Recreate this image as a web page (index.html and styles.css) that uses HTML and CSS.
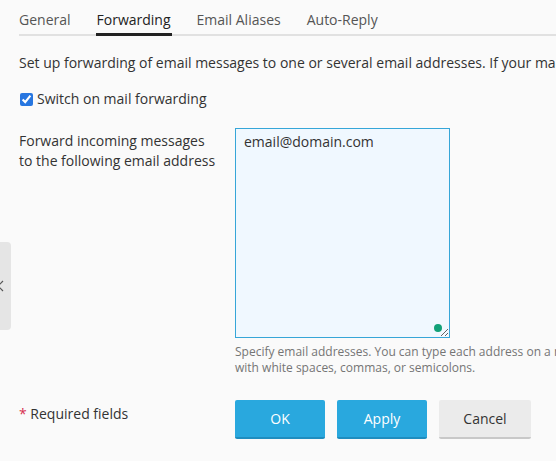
FILE: index.html
```html
<!DOCTYPE html>
<html lang="en">
<head>
    <meta charset="UTF-8">
    <meta name="viewport" content="width=device-width, initial-scale=1.0">
    <title>Mail Settings</title>
    <link rel="stylesheet" href="styles.css">
</head>
<body>
    <div class="side-toggle">
        <svg width="8" height="12" viewBox="0 0 8 12"><path d="M5 1 L0 6 L5 11" fill="none" stroke="#555" stroke-width="1.2"/></svg>
    </div>

    <div class="page">
        <div class="tabs">
            <div class="tab">General</div>
            <div class="tab active">Forwarding</div>
            <div class="tab">Email Aliases</div>
            <div class="tab">Auto-Reply</div>
        </div>

        <p class="intro">Set up forwarding of email messages to one or several email addresses. If your mailbox is full, messages will not be forwarded.</p>

        <label class="check-row">
            <input type="checkbox" checked>
            <span>Switch on mail forwarding</span>
        </label>

        <div class="form-row">
            <div class="field-label">Forward incoming messages<br>to the following email address</div>
            <div class="field">
                <div class="textarea-wrap">
                    <textarea class="addresses">email@domain.com</textarea>
                    <span class="status-dot"></span>
                </div>
                <div class="hint">Specify email addresses. You can type each address on a new line or separate them<br>with white spaces, commas, or semicolons.</div>
            </div>
        </div>

        <div class="form-row actions">
            <div class="required"><span class="star">*</span> Required fields</div>
            <div class="buttons">
                <button class="btn primary">OK</button>
                <button class="btn primary">Apply</button>
                <button class="btn">Cancel</button>
            </div>
        </div>
    </div>
</body>
</html>
```

FILE: styles.css
```css
html, body {
    overflow: hidden;
}
body {
    font-family: "Open Sans", "Liberation Sans", sans-serif;
    font-size: 14px;
    line-height: 20px;
    color: #333;
    background-color: #fafafa;
    margin: 0;
}
.page {
    padding-left: 19px;
}
.tabs {
    display: flex;
    gap: 24px;
    border-bottom: 2px solid #e1e1e1;
}
.tab {
    padding: 10px 1px 3px;
    border-bottom: 3px solid transparent;
    margin-bottom: -2px;
    color: #555;
}
.tab:first-child {
    margin-left: -1px;
}
.tab.active {
    color: #222;
    border-bottom-color: #222;
}
.intro {
    margin: 17px 0 0;
    white-space: nowrap;
}
.check-row {
    display: flex;
    align-items: center;
    margin-top: 16px;
}
.check-row input {
    width: 13px;
    height: 13px;
    margin: 0 4px 0 1px;
    accent-color: #2776e0;
}
.form-row {
    display: grid;
    grid-template-columns: 216px 1fr;
    margin-top: 19px;
}
.field-label {
    padding-top: 3px;
}
.textarea-wrap {
    position: relative;
    width: 215px;
}
.addresses {
    display: block;
    box-sizing: border-box;
    width: 215px;
    height: 210px;
    margin: 0;
    padding: 3px 8px;
    border: 1px solid #36a6d8;
    border-radius: 0;
    background-color: #f0f8ff;
    font-family: inherit;
    font-size: 14px;
    line-height: 20px;
    color: #333;
    outline: none;
}
.status-dot {
    position: absolute;
    right: 8px;
    bottom: 6px;
    width: 8px;
    height: 8px;
    border-radius: 50%;
    background-color: #12a179;
}
.hint {
    margin-top: 6px;
    font-size: 12px;
    line-height: 16px;
    color: #757575;
    white-space: nowrap;
}
.actions {
    margin-top: 24px;
}
.required {
    padding-top: 4px;
}
.star {
    color: #d6304f;
}
.buttons {
    display: flex;
    gap: 12px;
}
.btn {
    box-sizing: border-box;
    width: 90px;
    height: 39px;
    font-family: inherit;
    font-size: 14px;
    color: #333;
    background-color: #ebebeb;
    border: none;
    border-bottom: 2px solid #c8c8c8;
    border-radius: 2px;
    cursor: pointer;
}
.btn:last-child {
    width: 92px;
}
.btn.primary {
    color: #fff;
    background-color: #29a8de;
    border-bottom-color: #1f8dbf;
}
.side-toggle {
    position: absolute;
    left: -4px;
    top: 242px;
    width: 15px;
    height: 88px;
    border-radius: 4px;
    background-color: #e5e5e5;
    display: flex;
    align-items: center;
    justify-content: flex-start;
}
.side-toggle svg {
    margin-left: 2px;
}
```
